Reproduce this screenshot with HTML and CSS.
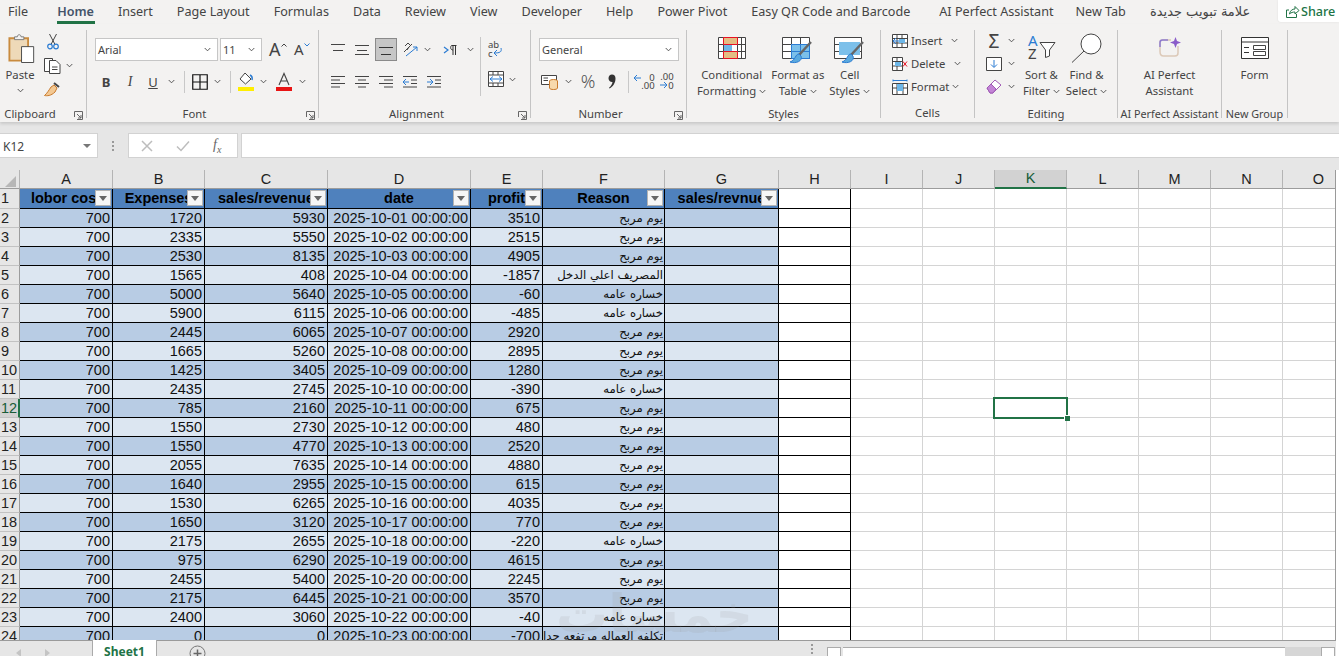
FILE: index.html
```html
<!DOCTYPE html>
<html lang="en">
<head>
<meta charset="utf-8">
<title>Book1 - Excel</title>
<link rel="stylesheet" href="styles.css">
</head>
<body>
<svg class="sprite" aria-hidden="true">
  <symbol id="chev" viewBox="0 0 8 5"><path d="M.8.8 4 4 7.2.8" fill="none" stroke="#444" stroke-width="1"/></symbol>
  <symbol id="launch" viewBox="0 0 9 9"><path d="M.5 6V.5H8.5V8.5H3M3 3 7 7M7 4V7H4" fill="none" stroke="#666" stroke-width="1"/></symbol>
</svg>

<header class="tabs">
  <nav class="tab-list">
    <span class="tab">File</span>
    <span class="tab tab-home">Home</span>
    <span class="tab">Insert</span>
    <span class="tab">Page Layout</span>
    <span class="tab">Formulas</span>
    <span class="tab">Data</span>
    <span class="tab">Review</span>
    <span class="tab">View</span>
    <span class="tab">Developer</span>
    <span class="tab">Help</span>
    <span class="tab">Power Pivot</span>
    <span class="tab tab-qr">Easy QR Code and Barcode</span>
    <span class="tab tab-ai">AI Perfect Assistant</span>
    <span class="tab">New Tab</span>
    <span class="tab tab-ar" dir="rtl">علامة تبويب جديدة</span>
  </nav>
  <div class="share">
    <svg width="15" height="14" viewBox="0 0 15 14"><path d="M4 6H1.5V13.5H11.5V10M4.500 10C5 6.500 7.500 5 10 5V2.500L14 6.500 10 10V8C8 8 6 8.500 4.500 10Z" fill="none" stroke="#217346"/></svg>
    <span>Share</span>
  </div>
</header>

<section class="ribbon">
  <div class="group g-clip">
    <div class="body clip-body">
      <div class="big paste">
        <span class="big-icon tall paste-icon">
          <svg width="28" height="31" viewBox="0 0 30 31"><path d="M1.500 4.500H21.500V28.500H1.500Z" fill="#eed9b8" stroke="#c98b3e" stroke-width="2"/><path d="M7 6V3H10C10 0 14 0 14 3H17V6Z" fill="#f3f2f1" stroke="#777"/><path d="M14.500 13.500H27.500V30.500H14.500Z" fill="#fff" stroke="#444"/></svg>
        </span>
        <span class="txt">Paste</span>
        <svg class="chev"><use href="#chev"/></svg>
      </div>
      <div class="clip-col">
        <svg width="12" height="17" viewBox="0 0 12 17"><path d="M2.500 1 8 11.500M9.500 1 4 11.500" stroke="#444" fill="none"/><circle cx="3" cy="13.500" r="2.300" fill="none" stroke="#2b7cd3" stroke-width="1.200"/><circle cx="9" cy="13.500" r="2.300" fill="none" stroke="#2b7cd3" stroke-width="1.200"/></svg>
        <span class="copy-row">
          <svg width="17" height="17" viewBox="0 0 17 17"><path d="M5 14.500H.5V1.500H8.500V3.500" fill="#fff" stroke="#444"/><path d="M5.500 3.500H12L16 7.500V16.500H5.500Z" fill="#fff" stroke="#444"/><path d="M8 10H13.500M8 12.500H13.500" stroke="#444"/></svg>
          <svg class="chev"><use href="#chev"/></svg>
        </span>
        <svg width="17" height="16" viewBox="0 0 17 16"><path d="M10 2 15 6" stroke="#444" stroke-width="2"/><path d="M7 6 10 4 13 7 11 11C7 15 3 15 .5 14.500 3 12.500 5 9 7 6Z" fill="#f3c892" stroke="#c97a2c"/></svg>
      </div>
    </div>
    <div class="label label-clip">Clipboard<svg class="launcher"><use href="#launch"/></svg></div>
  </div>

  <div class="group g-font">
    <div class="body">
      <div class="font-row1">
        <div class="combo combo-font"><span>Arial</span><svg class="chev"><use href="#chev"/></svg></div>
        <div class="combo combo-size"><span>11</span><svg class="chev"><use href="#chev"/></svg></div>
        <span class="grow-a">A<svg width="6" height="4" viewBox="0 0 6 4"><path d="M.5 3.500 3 1 5.500 3.500" fill="none" stroke="#444"/></svg></span>
        <span class="shrink-a">A<svg width="6" height="4" viewBox="0 0 6 4"><path d="M.5.500 3 3 5.500.500" fill="none" stroke="#2b7cd3"/></svg></span>
      </div>
      <div class="font-row2">
        <b class="fmt-b">B</b>
        <i class="fmt-i">I</i>
        <u class="fmt-u">U</u>
        <svg class="chev"><use href="#chev"/></svg>
        <span class="vsep"></span>
        <svg width="16" height="16" viewBox="0 0 16 16"><path d="M.750.750H15.250V15.250H.750ZM8 .750V15.250M.750 8H15.250" fill="none" stroke="#111" stroke-width="1.200"/></svg>
        <svg class="chev"><use href="#chev"/></svg>
        <span class="vsep"></span>
        <svg width="16" height="20" viewBox="0 0 16 20"><path d="M7 1 13 7 7.500 12 2 7Z" fill="#fff" stroke="#444"/><path d="M12 3C14 4 14.500 6 14 8" stroke="#2b7cd3" stroke-width="1.500" fill="none"/><rect y="15" width="16" height="4" fill="#ffee00"/></svg>
        <svg class="chev"><use href="#chev"/></svg>
        <svg width="16" height="20" viewBox="0 0 16 20"><path d="M3 13 8 1.500 13 13M5 9H11" fill="none" stroke="#444" stroke-width="1.100"/><rect y="15" width="16" height="4" fill="#e81414"/></svg>
        <svg class="chev"><use href="#chev"/></svg>
      </div>
    </div>
    <div class="label label-launch">Font<svg class="launcher"><use href="#launch"/></svg></div>
  </div>

  <div class="group g-align">
    <div class="body align-body">
      <div class="align-left">
        <div class="align-row1">
          <svg width="15" height="14" viewBox="0 0 15 14"><path d="M0 1.500H14M2 7.500H12" stroke="#444"/></svg>
          <svg width="15" height="14" viewBox="0 0 15 14"><path d="M0 2.500H14M2 7.500H12M0 11.500H14" stroke="#444"/></svg>
          <span class="align-on"><svg width="15" height="14" viewBox="0 0 15 14"><path d="M0 4.500H14M2 11.500H12" stroke="#333"/></svg></span>
          <svg width="17" height="15" viewBox="0 0 17 15"><path d="M2 10 10 2M3 4 6 1 8 3M5 8l2-3" stroke="#444" fill="none"/><path d="M4 14 15 5M15 5H11M15 5V9" stroke="#2b7cd3" fill="none"/></svg>
          <svg class="chev"><use href="#chev"/></svg>
          <svg class="rtl" width="14" height="12" viewBox="0 0 14 12"><path d="M1 3 5 6 1 9" stroke="#2b7cd3" fill="none" stroke-width="1.200"/><path d="M8.500 1.500H13.500M10 1.500V11M12.500 1.500V11M8.500 1.500C7 3 7.500 6 10 6" stroke="#333" fill="none"/></svg>
          <svg class="chev"><use href="#chev"/></svg>
        </div>
        <div class="align-row2">
          <svg width="15" height="14" viewBox="0 0 15 14"><path d="M0 1.500H14M0 5H9M0 8.500H14M0 12H9" stroke="#444"/></svg>
          <svg width="15" height="14" viewBox="0 0 15 14"><path d="M0 1.500H14M3 5H11M0 8.500H14M3 12H11" stroke="#444"/></svg>
          <svg width="15" height="14" viewBox="0 0 15 14"><path d="M0 1.500H14M5 5H14M0 8.500H14M5 12H14" stroke="#444"/></svg>
          <svg width="15" height="14" viewBox="0 0 15 14"><path d="M0 1.500H14M8 5H14M8 8.500H14M0 12H14" stroke="#444"/><path d="M6 7H0M3 4 0 7 3 10" stroke="#2b7cd3" fill="none"/></svg>
          <svg width="15" height="14" viewBox="0 0 15 14"><path d="M0 1.500H14M8 5H14M8 8.500H14M0 12H14" stroke="#444"/><path d="M0 7H6M3 4 6 7 3 10" stroke="#2b7cd3" fill="none"/></svg>
        </div>
      </div>
      <span class="vsep vsep-tall"></span>
      <div class="align-right">
        <svg class="wrap-ic" width="16" height="18" viewBox="0 0 16 18"><text x="0" y="8" class="mini">ab</text><text x="0" y="17" class="mini">c</text><path d="M13 8C14 12 12 13 6 13M9 10 6 13 9 16" stroke="#2b7cd3" fill="none"/></svg>
        <span class="merge">
          <svg width="16" height="16" viewBox="0 0 16 16"><path d="M.500.500H15.500V15.500H.500ZM.500 4H15.500M.500 12H15.500M5 .500V4M10 .500V4M5 12V15.500M10 12V15.500" fill="#fff" stroke="#444"/><path d="M2 8H14M5 5.500 2 8 5 10.500M11 5.500 14 8 11 10.500" stroke="#2b7cd3" fill="none"/></svg>
          <svg class="chev"><use href="#chev"/></svg>
        </span>
      </div>
    </div>
    <div class="label label-launch">Alignment<svg class="launcher"><use href="#launch"/></svg></div>
  </div>

  <div class="group g-num">
    <div class="body">
      <div class="combo combo-num"><span>General</span><svg class="chev"><use href="#chev"/></svg></div>
      <div class="num-row2">
        <svg width="18" height="16" viewBox="0 0 18 16"><path d="M.500 1.500H15.500V10.500H.500Z" fill="#fff" stroke="#444"/><path d="M2.500 4H7M2.500 6.500H7" stroke="#444"/><ellipse cx="12.500" cy="7" rx="4" ry="1.500" fill="#f7d9ac" stroke="#c97a2c"/><path d="M8.500 7V14C8.500 16 16.500 16 16.500 14V7" fill="#f7d9ac" stroke="#c97a2c"/></svg>
        <svg class="chev"><use href="#chev"/></svg>
        <span class="pct">%</span>
        <svg width="8" height="15" viewBox="0 0 8 15"><path d="M4 .5C6.200.5 7.500 2 7.500 4.500 7.500 9 5 12.500 1.500 14.500L1 13.800C3 12 4.300 10 4.500 8 2.500 8.300.5 6.500.5 4.300.5 2 2 .5 4 .5Z" fill="#333"/></svg>
        <span class="vsep"></span>
        <span class="dec dec-up"><svg width="8" height="8" viewBox="0 0 8 8"><path d="M8 4H1M4 1 1 4 4 7" stroke="#2b7cd3" fill="none"/></svg><span>0<br>.00</span></span>
        <span class="dec dec-down"><span>.00</span><span><svg width="8" height="8" viewBox="0 0 8 8"><path d="M0 4H7M4 1 7 4 4 7" stroke="#2b7cd3" fill="none"/></svg>0</span></span>
      </div>
    </div>
    <div class="label label-launch">Number<svg class="launcher"><use href="#launch"/></svg></div>
  </div>

  <div class="group g-styles">
    <div class="body big-row">
      <div class="big">
        <span class="big-icon">
          <svg width="28" height="22" viewBox="0 0 28 22"><path d="M.500.500H27.500V21.500H.500ZM.500 7.500H27.500M.500 14.500H27.500M5.500.500V21.500M19.500.500V21.500M23.500.500V21.500" fill="#fff" stroke="#444"/><path d="M5.500.500H19.500V7.500H5.500ZM5.500 14.500H19.500V21.500H5.500Z" fill="#e3bd84" stroke="#e81123"/><rect x="6" y="8" width="8" height="6" fill="#6db7e8"/></svg>
        </span>
        <span class="txt">Conditional</span>
        <span class="txt">Formatting<svg class="chev"><use href="#chev"/></svg></span>
      </div>
      <div class="big">
        <span class="big-icon">
          <svg width="31" height="28" viewBox="0 0 31 28"><path d="M.500.500H27.500V21.500H.500ZM.500 7.500H27.500M.500 14.500H27.500M9.500.500V21.500M18.500.500V21.500" fill="#fff" stroke="#444"/><rect x="9" y="7" width="18" height="14" fill="#7cc0ea"/><path d="M9.500 7.500H27.500V21.500H9.500ZM18.500 7.500V21.500M9.500 14.500H27.500" fill="none" stroke="#2b7cd3"/><path d="M29 5 17 18" stroke="#666" stroke-width="2.500"/><path d="M17 17C13 17 14 23 8 25 14 27 21 24 19 19Z" fill="#5aa9de" stroke="#2b7cd3"/></svg>
        </span>
        <span class="txt">Format as</span>
        <span class="txt">Table<svg class="chev"><use href="#chev"/></svg></span>
      </div>
      <div class="big">
        <span class="big-icon">
          <svg width="31" height="28" viewBox="0 0 31 28"><path d="M.500.500H27.500V21.500H.500ZM.500 7.500H27.500M.500 14.500H27.500" fill="#fff" stroke="#444"/><rect x="5" y="5" width="21" height="13" fill="#7cc0ea"/><path d="M29 5 17 18" stroke="#666" stroke-width="2.500"/><path d="M17 17C13 17 14 23 8 25 14 27 21 24 19 19Z" fill="#5aa9de" stroke="#2b7cd3"/></svg>
        </span>
        <span class="txt">Cell</span>
        <span class="txt">Styles<svg class="chev"><use href="#chev"/></svg></span>
      </div>
    </div>
    <div class="label">Styles</div>
  </div>

  <div class="group g-cells">
    <div class="body cells-body">
      <div class="cell-btn">
        <svg width="16" height="14" viewBox="0 0 16 14"><path d="M.500.500H15.500V13.500H.500ZM.500 4.500H15.500M.500 9H15.500M5 .500V13.500M10 .500V13.500" fill="#fff" stroke="#444"/><rect x="7" y="5" width="6" height="4" fill="#6db7e8"/><path d="M7 7H1M4 4 1 7 4 10" stroke="#2b7cd3" fill="none"/></svg>
        <span class="txt">Insert</span><svg class="chev"><use href="#chev"/></svg>
      </div>
      <div class="cell-btn">
        <svg width="16" height="14" viewBox="0 0 16 14"><path d="M.500.500H10.500V13.500H.500ZM.500 4.500H10.500M.500 9H10.500M5 .500V13.500" fill="#fff" stroke="#444"/><rect x="3" y="5" width="6" height="4" fill="#6db7e8"/><path d="M11 4.500 15 9.500M15 4.500 11 9.500" stroke="#e81123"/></svg>
        <span class="txt">Delete</span><svg class="chev"><use href="#chev"/></svg>
      </div>
      <div class="cell-btn cell-format">
        <svg width="16" height="16" viewBox="0 0 16 16"><path d="M.500 4.500H15.500V15.500H.500ZM.500 9H15.500M5 4.500V15.500M11 4.500V15.500" fill="#fff" stroke="#444"/><rect x="5" y="5" width="6" height="7" fill="#6db7e8"/><path d="M1 1.500H15M1 .500V2.500M15 .500V2.500" stroke="#2b7cd3"/></svg>
        <span class="txt">Format</span><svg class="chev"><use href="#chev"/></svg>
      </div>
    </div>
    <div class="label">Cells</div>
  </div>

  <div class="group g-edit">
    <div class="body edit-body">
      <div class="edit-col">
        <span class="edit-item"><span class="sigma">Σ</span><svg class="chev"><use href="#chev"/></svg></span>
        <span class="edit-item"><svg width="16" height="14" viewBox="0 0 16 14"><path d="M.500.500H15.500V13.500H.500Z" fill="#fff" stroke="#444"/><path d="M8 3V10M5 7.500 8 10.500 11 7.500" stroke="#2b7cd3" fill="none"/></svg><svg class="chev"><use href="#chev"/></svg></span>
        <span class="edit-item"><svg width="16" height="15" viewBox="0 0 16 15"><path d="M1 9 9 1 15 6 7 14 4 14Z" fill="#fff" stroke="#a05bb5"/><path d="M1 9 5 5 10 10 7 14 4 14Z" fill="#c384d6" stroke="#a05bb5"/></svg><svg class="chev"><use href="#chev"/></svg></span>
      </div>
      <div class="big">
        <span class="big-icon tall">
          <svg class="az-ic" width="29" height="27" viewBox="0 0 29 27"><text x="1" y="13" class="az az-a">A</text><text x="1" y="26" class="az">Z</text><path d="M13 9.500H28L22.500 17V23L18.500 24.500V17Z" fill="#fff" stroke="#444"/></svg>
        </span>
        <span class="txt">Sort &amp;</span>
        <span class="txt">Filter<svg class="chev"><use href="#chev"/></svg></span>
      </div>
      <div class="big">
        <span class="big-icon tall">
          <svg width="31" height="30" viewBox="0 0 31 30"><circle cx="20" cy="11" r="10" fill="#fff" stroke="#444"/><path d="M13 18 1 29.500" stroke="#444"/></svg>
        </span>
        <span class="txt">Find &amp;</span>
        <span class="txt">Select<svg class="chev"><use href="#chev"/></svg></span>
      </div>
    </div>
    <div class="label">Editing</div>
  </div>

  <div class="group g-ai">
    <div class="body big-center">
      <div class="big">
        <span class="big-icon">
          <svg width="22" height="20" viewBox="0 0 22 20"><path d="M12 3H3.500C2 3 1 4 1 5.500V14.500C1 16.500 2 19 4.500 19H16C18 19 19 18 19 16V9" fill="none" stroke="#dcc9b8" stroke-width="1.500"/><path d="M1 10V5.500C1 4 2 3 3.500 3H9" fill="none" stroke="#8f7dd0" stroke-width="1.500"/><path d="M16.500 0 18 4 22 5.500 18 7 16.500 11 15 7 11 5.500 15 4Z" fill="#8a5cc9"/></svg>
        </span>
        <span class="txt">AI Perfect</span>
        <span class="txt">Assistant</span>
      </div>
    </div>
    <div class="label label-small">AI Perfect Assistant</div>
  </div>

  <div class="group g-new">
    <div class="body big-center">
      <div class="big">
        <span class="big-icon">
          <svg width="28" height="22" viewBox="0 0 28 22"><path d="M.500.500H27.500V21.500H.500ZM.500 5H27.500M3 10.500H8M3 15.500H8" fill="#fff" stroke="#333"/><path d="M12.500 8.500H24.500V12.500H12.500ZM12.500 14.500H24.500V18.500H12.500Z" fill="#fff" stroke="#444"/></svg>
        </span>
        <span class="txt">Form</span>
      </div>
    </div>
    <div class="label label-small">New Group</div>
  </div>
</section>

<section class="formula-bar">
  <div class="name-box"><span>K12</span><i class="name-arrow"></i></div>
  <div class="grip"><i></i><i></i><i></i></div>
  <div class="fx-box">
    <svg width="12" height="12" viewBox="0 0 12 12"><path d="M1 1 11 11M11 1 1 11" stroke="#bdbdbd" stroke-width="1.500"/></svg>
    <svg width="14" height="12" viewBox="0 0 14 12"><path d="M1 6.500 5 10.500 13 1.500" fill="none" stroke="#bdbdbd" stroke-width="1.500"/></svg>
    <span class="fx">f<sub>x</sub></span>
  </div>
  <div class="fx-input"></div>
</section>

<main class="sheet">
  <table class="grid">
    <colgroup>
      <col class="c-row"><col class="c-a"><col class="c-b"><col class="c-c"><col class="c-d"><col class="c-e"><col class="c-f"><col class="c-g"><col class="c-std"><col class="c-std"><col class="c-std"><col class="c-std"><col class="c-std"><col class="c-std"><col class="c-std"><col class="c-std">
    </colgroup>
    <thead>
      <tr><th class="corner"><i></i></th><th>A</th><th>B</th><th>C</th><th>D</th><th>E</th><th>F</th><th>G</th><th>H</th><th>I</th><th>J</th><th class="on">K</th><th>L</th><th>M</th><th>N</th><th>O</th></tr>
    </thead>
    <tbody>
      <tr class="head"><th>1</th><td>lobor cost<i class="flt"></i></td><td>Expenses<i class="flt"></i></td><td>sales/revenue<i class="flt"></i></td><td>date<i class="flt"></i></td><td>profit<i class="flt"></i></td><td>Reason<i class="flt"></i></td><td>sales/revnue<i class="flt"></i></td><td></td><td></td><td></td><td></td><td></td><td></td><td></td><td></td></tr>
      <tr><th>2</th><td>700</td><td>1720</td><td>5930</td><td>2025-10-01 00:00:00</td><td>3510</td><td class="ar">يوم مربح</td><td></td><td></td><td></td><td></td><td></td><td></td><td></td><td></td><td></td></tr>
      <tr><th>3</th><td>700</td><td>2335</td><td>5550</td><td>2025-10-02 00:00:00</td><td>2515</td><td class="ar">يوم مربح</td><td></td><td></td><td></td><td></td><td></td><td></td><td></td><td></td><td></td></tr>
      <tr><th>4</th><td>700</td><td>2530</td><td>8135</td><td>2025-10-03 00:00:00</td><td>4905</td><td class="ar">يوم مربح</td><td></td><td></td><td></td><td></td><td></td><td></td><td></td><td></td><td></td></tr>
      <tr><th>5</th><td>700</td><td>1565</td><td>408</td><td>2025-10-04 00:00:00</td><td>-1857</td><td class="ar">المصريف اعلي الدخل</td><td></td><td></td><td></td><td></td><td></td><td></td><td></td><td></td><td></td></tr>
      <tr><th>6</th><td>700</td><td>5000</td><td>5640</td><td>2025-10-05 00:00:00</td><td>-60</td><td class="ar">خساره عامه</td><td></td><td></td><td></td><td></td><td></td><td></td><td></td><td></td><td></td></tr>
      <tr><th>7</th><td>700</td><td>5900</td><td>6115</td><td>2025-10-06 00:00:00</td><td>-485</td><td class="ar">خساره عامه</td><td></td><td></td><td></td><td></td><td></td><td></td><td></td><td></td><td></td></tr>
      <tr><th>8</th><td>700</td><td>2445</td><td>6065</td><td>2025-10-07 00:00:00</td><td>2920</td><td class="ar">يوم مربح</td><td></td><td></td><td></td><td></td><td></td><td></td><td></td><td></td><td></td></tr>
      <tr><th>9</th><td>700</td><td>1665</td><td>5260</td><td>2025-10-08 00:00:00</td><td>2895</td><td class="ar">يوم مربح</td><td></td><td></td><td></td><td></td><td></td><td></td><td></td><td></td><td></td></tr>
      <tr><th>10</th><td>700</td><td>1425</td><td>3405</td><td>2025-10-09 00:00:00</td><td>1280</td><td class="ar">يوم مربح</td><td></td><td></td><td></td><td></td><td></td><td></td><td></td><td></td><td></td></tr>
      <tr><th>11</th><td>700</td><td>2435</td><td>2745</td><td>2025-10-10 00:00:00</td><td>-390</td><td class="ar">خساره عامه</td><td></td><td></td><td></td><td></td><td></td><td></td><td></td><td></td><td></td></tr>
      <tr><th class="on">12</th><td>700</td><td>785</td><td>2160</td><td>2025-10-11 00:00:00</td><td>675</td><td class="ar">يوم مربح</td><td></td><td></td><td></td><td></td><td class="active"><i class="sel"></i></td><td></td><td></td><td></td><td></td></tr>
      <tr><th>13</th><td>700</td><td>1550</td><td>2730</td><td>2025-10-12 00:00:00</td><td>480</td><td class="ar">يوم مربح</td><td></td><td></td><td></td><td></td><td></td><td></td><td></td><td></td><td></td></tr>
      <tr><th>14</th><td>700</td><td>1550</td><td>4770</td><td>2025-10-13 00:00:00</td><td>2520</td><td class="ar">يوم مربح</td><td></td><td></td><td></td><td></td><td></td><td></td><td></td><td></td><td></td></tr>
      <tr><th>15</th><td>700</td><td>2055</td><td>7635</td><td>2025-10-14 00:00:00</td><td>4880</td><td class="ar">يوم مربح</td><td></td><td></td><td></td><td></td><td></td><td></td><td></td><td></td><td></td></tr>
      <tr><th>16</th><td>700</td><td>1640</td><td>2955</td><td>2025-10-15 00:00:00</td><td>615</td><td class="ar">يوم مربح</td><td></td><td></td><td></td><td></td><td></td><td></td><td></td><td></td><td></td></tr>
      <tr><th>17</th><td>700</td><td>1530</td><td>6265</td><td>2025-10-16 00:00:00</td><td>4035</td><td class="ar">يوم مربح</td><td></td><td></td><td></td><td></td><td></td><td></td><td></td><td></td><td></td></tr>
      <tr><th>18</th><td>700</td><td>1650</td><td>3120</td><td>2025-10-17 00:00:00</td><td>770</td><td class="ar">يوم مربح</td><td></td><td></td><td></td><td></td><td></td><td></td><td></td><td></td><td></td></tr>
      <tr><th>19</th><td>700</td><td>2175</td><td>2655</td><td>2025-10-18 00:00:00</td><td>-220</td><td class="ar">خساره عامه</td><td></td><td></td><td></td><td></td><td></td><td></td><td></td><td></td><td></td></tr>
      <tr><th>20</th><td>700</td><td>975</td><td>6290</td><td>2025-10-19 00:00:00</td><td>4615</td><td class="ar">يوم مربح</td><td></td><td></td><td></td><td></td><td></td><td></td><td></td><td></td><td></td></tr>
      <tr><th>21</th><td>700</td><td>2455</td><td>5400</td><td>2025-10-20 00:00:00</td><td>2245</td><td class="ar">يوم مربح</td><td></td><td></td><td></td><td></td><td></td><td></td><td></td><td></td><td></td></tr>
      <tr><th>22</th><td>700</td><td>2175</td><td>6445</td><td>2025-10-21 00:00:00</td><td>3570</td><td class="ar">يوم مربح</td><td></td><td></td><td></td><td></td><td></td><td></td><td></td><td></td><td></td></tr>
      <tr><th>23</th><td>700</td><td>2400</td><td>3060</td><td>2025-10-22 00:00:00</td><td>-40</td><td class="ar">خساره عامه</td><td></td><td></td><td></td><td></td><td></td><td></td><td></td><td></td><td></td></tr>
      <tr><th>24</th><td>700</td><td>0</td><td>0</td><td>2025-10-23 00:00:00</td><td>-700</td><td class="ar">تكلفه العماله مرتفعه جدا</td><td></td><td></td><td></td><td></td><td></td><td></td><td></td><td></td><td></td></tr>
    </tbody>
  </table>
</main>

<footer class="sheet-bar">
  <span class="nav-arrow nav-left"></span>
  <span class="nav-arrow nav-right"></span>
  <span class="sheet-tab">Sheet1</span>
  <svg class="add-sheet" width="17" height="17" viewBox="0 0 17 17"><circle cx="8.500" cy="8.500" r="7.500" fill="none" stroke="#777"/><path d="M8.500 4.500V12.500M4.500 8.500H12.500" stroke="#666" stroke-width="1.500"/></svg>
  <span class="bar-dots"><i></i><i></i><i></i></span>
  <div class="hscroll">
    <span class="hs-btn hs-left"></span>
    <span class="hs-track"></span>
    <span class="hs-thumb"></span>
    <span class="hs-btn hs-right"></span>
  </div>
</footer>
<div class="watermark" dir="rtl">خمسات</div>
</body>
</html>
```
FILE: styles.css
```css
* { box-sizing: border-box; }
html, body { margin: 0; height: 100%; }
body {
  position: relative;
  width: 1339px;
  height: 656px;
  overflow: hidden;
  background: #fff;
  font-family: "Noto Sans", "DejaVu Sans", sans-serif;
  color: #444;
  font-size: 12px;
}
.sprite { display: none; }

/* tabs */
.tabs { display: flex; height: 24px; background: #f3f2f1; justify-content: space-between; }
.tab-list { display: flex; padding-left: 8px; gap: 24px; font-size: 12.6px; line-height: 24px; white-space: nowrap; }
.tab { display: block; height: 24px; }
.tab:first-child { margin-right: 5px; }
.tab-home { position: relative; font-weight: 600; color: #44546a; }
.tab-home::after { content: ""; position: absolute; left: 0; right: -1px; bottom: 0; height: 3px; background: #217346; }
.tab-qr { margin-right: 5px; }
.tab-ai { margin-right: -2px; }
.tab-ar { font-family: "DejaVu Sans", sans-serif; font-size: 13px; }
.share {
  width: 61px; height: 22px; background: #fff;
  border-radius: 0 0 0 3px;
  display: flex; align-items: center; gap: 1px; padding-left: 7px;
  color: #217346; font-size: 12.6px; font-weight: 500;
  box-shadow: 0 0 2px #ddd;
}

/* ribbon */
.ribbon { display: flex; height: 98px; background: #f3f2f1; box-shadow: 0 2px 3px rgba(0,0,0,.13); position: relative; }
.group { margin-top: 6px; height: 88px; border-right: 1px solid #c4c4c4; display: flex; flex-direction: column; flex: none; }
.body { height: 76px; }
.label { position: relative; height: 12px; line-height: 16px; text-align: center; white-space: nowrap; font-size: 11.3px; }
.label-launch { padding-right: 16px; }
.label-clip { padding-right: 26px; }
.label-small { font-size: 10.8px; }
.launcher { position: absolute; right: 3px; top: 5px; width: 9px; height: 9px; }
.g-clip { width: 87px; }
.g-font { width: 232px; }
.g-align { width: 212px; }
.g-num { width: 156px; }
.g-styles { width: 194px; }
.g-cells { width: 94px; }
.g-edit { width: 143px; }
.g-ai { width: 104px; }
.g-new { width: 66px; }
.chev { width: 7px; height: 5px; display: block; flex: none; }
.txt { display: flex; align-items: center; gap: 3px; line-height: 16px; height: 16px; white-space: nowrap; font-size: 11.3px; }
.vsep { display: block; width: 1px; height: 22px; background: #c8c8c8; }

.big { display: flex; flex-direction: column; align-items: center; flex: none; }
.big-icon { height: 37px; display: flex; align-items: flex-start; justify-content: center; padding-top: 7px; }
.big-icon.tall { padding-top: 3px; }
.paste-icon { padding-left: 4px; }
.big-row { display: flex; gap: 5px; padding-left: 10px; }
.big-center { display: flex; justify-content: center; }

/* clipboard */
.clip-body { display: grid; grid-template-columns: 40px 46px; }
.paste .chev { margin-top: 5px; }
.clip-col { display: flex; flex-direction: column; gap: 7px; padding: 3px 0 0 4px; align-items: flex-start; }
.clip-col > svg:first-child { margin-left: 3px; }
.copy-row { display: flex; align-items: center; gap: 5px; }

/* combos */
.combo {
  height: 23px; background: #fff; border: 1px solid #c6c6c6;
  display: flex; align-items: center; justify-content: space-between;
  padding: 0 6px 0 2px; font-size: 11px; flex: none;
}
.combo-font { width: 123px; }
.combo-size { width: 42px; margin-left: 2px; }
.combo-num { width: 140px; margin: 8px 0 0 8px; }

/* font group */
.font-row1 { display: flex; align-items: center; margin: 8px 0 0 8px; }
.grow-a, .shrink-a { display: flex; font-family: "Noto Sans", sans-serif; align-items: flex-start; }
.grow-a { font-size: 18px; margin-left: 7px; line-height: 23px; width: 25px; }
.shrink-a { font-size: 15px; line-height: 23px; width: 20px; color: #444; }
.grow-a svg, .shrink-a svg { margin-top: 5px; }
.font-row2 {
  display: grid; align-items: center; justify-items: center;
  grid-template-columns: 22px 26px 20px 16px 10px 21px 14px 12px 20px 14px 28px 8px;
  height: 23px; margin: 9px 0 0 8px;
}
.fmt-b, .fmt-i, .fmt-u { font-size: 13px; font-family: "Noto Sans", sans-serif; }
.fmt-i { font-family: "Liberation Serif", serif; font-size: 14px; }

/* alignment */
.align-body { display: flex; padding: 8px 0 0 7px; }
.align-left { width: 151px; }
.align-row1, .align-row2 {
  display: grid; align-items: center; justify-items: center;
  height: 23px;
}
.align-row1 { grid-template-columns: 24px 24px 24px 25px 8px 33px 12px; }
.align-row2 { grid-template-columns: repeat(5, 24px); margin-top: 9px; }
.rtl { margin-left: 5px; }
.align-on { width: 22px; height: 23px; background: #c6c6c6; border: 1px solid #8a8a8a; display: flex; align-items: center; justify-content: center; }
.vsep-tall { height: 59px; margin: -1px 0 0 3px; }
.align-right { display: flex; flex-direction: column; padding-left: 7px; gap: 13px; padding-top: 2px; }
.wrap-ic { overflow: visible; }
.merge { display: flex; align-items: center; gap: 5px; }
.mini { font: 9.5px "Noto Sans", sans-serif; fill: #444; }

/* number */
.num-row2 {
  display: grid; align-items: center; justify-items: center;
  grid-template-columns: 22px 14px 26px 22px 10px 22px 24px;
  height: 23px; margin: 9px 0 0 8px;
}
.pct { font-size: 18px; line-height: 23px; color: #555; font-weight: 300; }
.dec { display: flex; font: 9.5px/8px "Noto Sans", sans-serif; color: #444; align-items: flex-start; text-align: right; }
.dec-down { flex-direction: column; align-items: flex-end; }

/* cells */
.cells-body { padding-left: 11px; margin-top: -1px; }
.cell-btn { display: flex; align-items: center; height: 23px; }
.cell-btn .txt { margin-left: 3px; }
.cell-btn .chev { margin-left: 9px; }
.cell-format .chev { margin-left: 3px; }

/* editing */
.edit-body { display: flex; padding-left: 11px; gap: 6px; }
.edit-col { width: 31px; display: flex; flex-direction: column; margin-top: -1px; }
.edit-item { display: flex; align-items: center; height: 23px; gap: 6px; }
.sigma { width: 16px; font-size: 19px; line-height: 20px; text-align: center; }
.az-ic { overflow: visible; }
.az { font: 15px "Noto Sans", sans-serif; fill: #444; }
.az-a { fill: #2b7cd3; }

/* formula */
.formula-bar { display: flex; height: 48px; padding-top: 11px; background: #e6e6e6; }
.formula-bar > * { height: 25px; }
.name-box { width: 98px; background: #fff; border: 1px solid #d2d2d2; border-left: 0; display: flex; align-items: center; justify-content: space-between; padding: 1px 6px 0 3px; font-size: 12px; }
.name-arrow { width: 0; height: 0; border: 4px solid transparent; border-top: 4px solid #777; border-bottom: 0; }
.grip { width: 30px; display: flex; flex-direction: column; align-items: center; justify-content: center; gap: 2px; }
.grip i, .bar-dots i { display: block; width: 2px; height: 2px; background: #999; }
.fx-box { width: 110px; background: #fff; border: 1px solid #d2d2d2; display: flex; align-items: center; gap: 23px; padding: 0 0 0 12px; }
.fx { font: italic 14px "Liberation Serif", serif; color: #666; }
.fx sub { font-size: 10px; }
.fx-input { flex: 1; margin-left: 3px; background: #fff; border: 1px solid #d2d2d2; border-right: 0; }

/* sheet */
.sheet { width: 1336px; height: 470px; overflow: hidden; border-right: 1px solid #9a9a9a; }
.grid { border-collapse: separate; border-spacing: 0; table-layout: fixed; width: 1355px; font: 14.5px "Liberation Sans", "DejaVu Sans", sans-serif; color: #111; }
.c-row { width: 20px; } .c-a { width: 93px; } .c-b { width: 92px; } .c-c { width: 123px; }
.c-d { width: 143px; } .c-e { width: 72px; } .c-f { width: 122px; } .c-g { width: 114px; }
.c-std { width: 72px; }
.grid th { background: #e6e6e6; font-weight: 400; padding: 0; color: #222; overflow: hidden; }
.grid thead th { height: 18px; line-height: 17px; border-bottom: 1px solid #9c9c9c; border-right: 1px solid #b4b4b4; text-align: center; }
.corner { position: relative; }
.corner i { position: absolute; right: 3px; bottom: 1px; width: 0; height: 0; border-left: 11px solid transparent; border-bottom: 11px solid #b7b7b7; }
.grid tbody th { height: 19px; line-height: 18px; border-bottom: 1px solid #c2c2c2; border-right: 1px solid #9c9c9c; text-align: left; padding-left: 1px; white-space: nowrap; }
.grid thead th.on { background: #d2d2d2; color: #185c37; border-bottom: 2px solid #217346; }
.grid tbody th.on { background: #d2d2d2; color: #185c37; border-right: 2px solid #217346; }
.grid td {
  height: 19px; line-height: 18px; padding: 0 2px 0 0; text-align: right;
  white-space: nowrap; overflow: hidden;
  border-right: 1px solid #d4d4d4; border-bottom: 1px solid #d4d4d4;
}
.grid td:nth-child(-n+9) { border-right-color: #000; border-bottom-color: #000; }
.grid tbody tr:nth-child(even) td:nth-child(-n+8) { background: #b8cce4; }
.grid tbody tr:nth-child(odd) td:nth-child(-n+8) { background: #dce6f1; }
.grid tbody tr.head td:nth-child(-n+8) { background: #4f81bd; position: relative; font-weight: 700; text-align: center; color: #000; padding: 0; }
.grid tbody tr.head th, .grid tbody tr.head td { height: 20px; line-height: 19px; }
.grid td.ar { font-family: "DejaVu Sans", sans-serif; font-size: 11.7px; direction: rtl; text-align: right; padding: 0 1px 0 0; }
.flt {
  position: absolute; right: 1px; top: 1px; width: 16px; height: 16px;
  background: #f6f6f6; border: 1px solid #b4b4b4;
}
.flt::after {
  content: ""; position: absolute; left: 3px; top: 5px; width: 0; height: 0;
  border: 4px solid transparent; border-top: 5px solid #666; border-bottom: 0;
}
.active { position: relative; overflow: visible !important; }
.sel { position: absolute; left: -2px; top: -2px; width: 75px; height: 22px; border: 2px solid #217346; }
.sel::after { content: ""; position: absolute; right: -4px; bottom: -4px; width: 5px; height: 5px; background: #217346; border: 1px solid #fff; border-width: 1px 0 0 1px; box-sizing: content-box; }

/* sheet bar */
.sheet-bar { display: flex; width: 1336px; height: 16px; background: linear-gradient(#9a9a9a 1px, #e6e6e6 1px); overflow: hidden; align-items: flex-start; position: relative; }
.nav-arrow { width: 0; height: 0; border: 4px solid transparent; margin-top: 9px; }
.nav-left { border-right: 5px solid #c4c4c4; border-left: 0; margin-left: 16px; }
.nav-right { border-left: 5px solid #c4c4c4; border-right: 0; margin-left: 24px; }
.sheet-tab { width: 65px; height: 16px; margin-left: 42px; background: #fff; border: 1px solid #aaa; border-width: 0 1px; color: #217346; font-weight: 700; font-size: 12px; line-height: 24px; text-align: center; }
.add-sheet { margin: 5px 0 0 32px; flex: none; }
.bar-dots { display: flex; flex-direction: column; gap: 2px; margin: 4px 0 0 605px; }
.hscroll { display: flex; margin-left: 14px; margin-top: 7px; height: 9px; width: 508px; }
.hs-btn { width: 14px; height: 9px; background: #fff; border: 1px solid #ababab; border-bottom: 0; }
.hs-left { margin-right: 2px; }
.hs-track { flex: 1; background: #fff; border-top: 1px solid #ababab; }
.hs-thumb { width: 36px; background: #d6d6d6; }

.watermark {
  position: absolute; left: 588px; top: 583px; width: 165px; text-align: center;
  font: 700 52px/62px "DejaVu Sans", sans-serif; color: rgba(150,150,150,.14);
  white-space: nowrap;
}
```
